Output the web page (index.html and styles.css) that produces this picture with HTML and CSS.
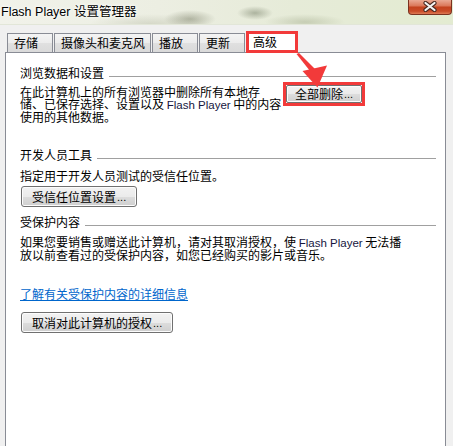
FILE: index.html
```html
<!DOCTYPE html>
<html lang="zh-CN">
<head>
<meta charset="utf-8">
<title>Flash Player 设置管理器</title>
<link rel="stylesheet" href="styles.css">
</head>
<body>
<div class="window">
  <div class="titlebar">
    <span class="title">Flash Player 设置管理器</span>
    <div class="close">
      <svg class="close-x" width="18" height="11" viewBox="0 0 18 11">
        <path d="M4.5 2 L13.5 9 M13.5 2 L4.5 9" stroke="#4a2a22" stroke-width="4.2" stroke-linecap="round"/>
        <path d="M4.5 2 L13.5 9 M13.5 2 L4.5 9" stroke="#f4f4f4" stroke-width="2.2" stroke-linecap="round"/>
      </svg>
    </div>
  </div>
  <div class="client">
    <div class="tabs">
      <div class="tab">存储</div>
      <div class="tab">摄像头和麦克风</div>
      <div class="tab">播放</div>
      <div class="tab">更新</div>
      <div class="tab active">高级</div>
    </div>
    <div class="panel">
      <section class="group">
        <div class="heading"><span>浏览数据和设置</span><i class="rule"></i></div>
        <div class="row">
          <p class="text dense wide">在此计算机上的所有浏览器中删除所有本地存<br>储、已保存选择、设置以及 <span class="latin">Flash Player</span> 中的内容<br>使用的其他数据。</p>
          <div class="mark"><button class="btn small">全部删除<span class="dots">...</span></button></div>
        </div>
      </section>
      <section class="group g2">
        <div class="heading"><span>开发人员工具</span><i class="rule"></i></div>
        <p class="text single">指定用于开发人员测试的受信任位置。</p>
        <button class="btn">受信任位置设置<span class="dots">...</span></button>
      </section>
      <section class="group g3">
        <div class="heading"><span>受保护内容</span><i class="rule"></i></div>
        <p class="text dense">如果您要销售或赠送此计算机，请对其取消授权，使 <span class="latin">Flash Player</span> 无法播<br>放以前查看过的受保护内容，如您已经购买的影片或音乐。</p>
        <a class="link" href="#">了解有关受保护内容的详细信息</a>
        <button class="btn">取消对此计算机的授权<span class="dots">...</span></button>
      </section>
    </div>
  </div>
  <svg class="arrow" width="453" height="446" viewBox="0 0 453 446">
    <polygon points="296.5,54 299,53 315,69 310,71" fill="#f23a3a"/>
    <polygon points="317.5,87.5 302.5,71 327,65.5" fill="#f23a3a"/>
  </svg>
</div>
</body>
</html>
```

FILE: styles.css
```css
html, body {
  margin: 0;
  padding: 0;
}

body {
  width: 453px;
  height: 446px;
  overflow: hidden;
  background: #f0f0f0;
  font-family: "Noto Sans CJK SC", "Liberation Sans", sans-serif;
  font-size: 12px;
  color: #000;
}

.window {
  position: relative;
  width: 453px;
  height: 446px;
  overflow: hidden;
}

.titlebar {
  height: 25px;
  display: flex;
  justify-content: space-between;
  align-items: flex-start;
  background:
    radial-gradient(ellipse 26px 9px at 190px 19px, rgba(110, 115, 90, 0.45), rgba(110, 115, 90, 0)),
    radial-gradient(ellipse 18px 7px at 255px 13px, rgba(100, 110, 85, 0.45), rgba(100, 110, 85, 0)),
    radial-gradient(ellipse 40px 8px at 305px 22px, rgba(140, 150, 115, 0.35), rgba(140, 150, 115, 0)),
    radial-gradient(ellipse 60px 10px at 150px 24px, rgba(160, 165, 140, 0.3), rgba(160, 165, 140, 0)),
    linear-gradient(90deg, #f1f2ea 0%, #eceee2 35%, #e6ebd8 65%, #e3ebd1 100%);
  border-bottom: 1px solid #e2e6d8;
  box-sizing: border-box;
}

.title {
  font-family: "Liberation Sans", "Noto Sans CJK SC", sans-serif;
  font-size: 12.5px;
  line-height: 14px;
  margin: 5px 0 0 1px;
  color: #000;
  text-shadow: 0 0 5px #fff, 0 0 3px #fff;
}

.close {
  width: 44px;
  height: 15px;
  margin-right: 1px;
  box-sizing: border-box;
  border: 1px solid #7b3220;
  border-top: 0;
  border-radius: 0 0 4px 4px;
  background: linear-gradient(#eaa993 0%, #dc7a5d 40%, #c4431f 52%, #c94b28 80%, #de7a55 100%);
  display: flex;
  align-items: center;
  justify-content: center;
}

.close-x {
  display: block;
  margin-top: -1px;
}

.client {
  padding-top: 8px;
}

.tabs {
  display: flex;
  align-items: flex-end;
  height: 19px;
  margin-left: 7px;
  position: relative;
  z-index: 1;
}

.tab {
  height: 19px;
  min-width: 46px;
  box-sizing: border-box;
  padding: 0 5px 0 6px;
  margin-right: 1px;
  border: 1px solid #898c95;
  border-bottom: 0;
  background: linear-gradient(#f4f4f4 0%, #ececec 50%, #e0e0e0 51%, #dadada 100%);
  line-height: 18px;
  white-space: nowrap;
}

.tab.active {
  height: 22px;
  margin: 0 0 -1px 0;
  padding: 0 7px;
  min-width: 52px;
  background: #fff;
  border: 0;
  outline: 3px solid #f23a3a;
  outline-offset: -3px;
  line-height: 22px;
}

.panel {
  margin-left: 5px;
  width: 441px;
  height: 400px;
  box-sizing: border-box;
  border: 1px solid #898c95;
  background: #fff;
  padding: 12px 9px 0 14px;
}

.group {
  display: block;
}

.g2 {
  margin-top: 24px;
}

.g3 {
  margin-top: 7px;
}

.heading {
  display: flex;
  align-items: center;
  line-height: 16px;
  height: 16px;
}

.rule {
  flex: 1;
  height: 1px;
  background: #a0a0a0;
  margin: 6px 0 0 5px;
}

.text {
  margin: 0;
}

.dense {
  line-height: 12px;
  margin-top: 5px;
}

.g3 .dense {
  margin-top: 6px;
}

.single {
  line-height: 14px;
  margin-top: 6px;
}

.wide {
  width: 263px;
  flex: none;
}

.latin {
  font-family: "Liberation Sans", sans-serif;
  font-size: 11.5px;
  color: #16163e;
}

.row {
  display: flex;
  align-items: flex-start;
}

.mark {
  margin-top: 1px;
  border: 3px solid #f23a3a;
  display: flex;
}

.btn {
  display: flex;
  align-items: center;
  justify-content: center;
  height: 21px;
  box-sizing: border-box;
  padding: 0 10px;
  margin: 3px 0 0 1px;
  border: 1px solid #707070;
  border-radius: 3px;
  box-shadow: inset 0 0 0 1px #fcfcfc;
  background: linear-gradient(#f2f2f2 0%, #ebebeb 50%, #dddddd 51%, #cfcfcf 100%);
  font-family: "Noto Sans CJK SC", "Liberation Sans", sans-serif;
  font-size: 12px;
  line-height: 14px;
  color: #000;
  white-space: nowrap;
}

.btn.small {
  width: 76px;
  height: 18px;
  margin: 0;
  padding: 0;
  border-radius: 2px;
}

.dots {
  font-family: "Liberation Sans", sans-serif;
  font-size: 11px;
  margin-left: 1px;
}

.g3 .btn {
  margin-top: 11px;
}

.link {
  display: block;
  width: max-content;
  margin-top: 26px;
  line-height: 14px;
  color: #0066cc;
  text-decoration: underline;
}

.arrow {
  position: absolute;
  left: 0;
  top: 0;
  pointer-events: none;
  z-index: 5;
}
```
